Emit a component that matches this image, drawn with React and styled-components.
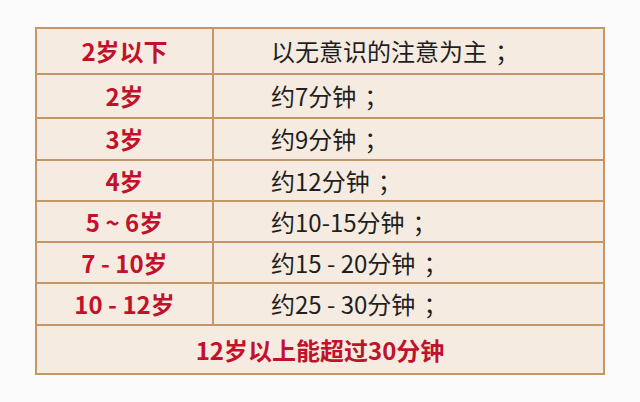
import React from 'react';
import styled, { createGlobalStyle } from 'styled-components';

const GlobalStyle = createGlobalStyle`
  html, body {
    margin: 0;
    padding: 0;
    background: #fbfbfc;
  }
  body {
    font-family: "Noto Sans CJK SC", "Noto Sans", sans-serif;
  }
`;

const Page = styled.div`
  width: 640px;
  height: 402px;
  padding: 27px 35px 0 35px;
  box-sizing: border-box;
`;

const Table = styled.table`
  width: 570px;
  border-collapse: collapse;
  background: #f6ebe0;
  border: 2px solid #bf9160;
`;

const Row = styled.tr`
  height: ${p => p.h}px;
`;

const Age = styled.td`
  width: 175px;
  border: 2px solid #c49766;
  text-align: center;
  vertical-align: middle;
  color: #c1122b;
  font-weight: 700;
  font-size: 24px;
  padding: 0;
  line-height: 1;
`;

const Span = styled(Age)`
  width: auto;
`;

const Time = styled.td`
  border: 2px solid #c49766;
  padding: 0 0 0 57px;
  vertical-align: middle;
  color: #1f1f1f;
  font-size: 24px;
  line-height: 1;
`;

const Semi = styled.span`
  margin-left: 8px;
`;

const rows = [
  ['2岁以下', '以无意识的注意为主', 46],
  ['2岁', '约7分钟', 44],
  ['3岁', '约9分钟', 42],
  ['4岁', '约12分钟', 41],
  ['5 ~ 6岁', '约10-15分钟', 41],
  ['7 - 10岁', '约15 - 20分钟', 41],
  ['10 - 12岁', '约25 - 30分钟', 42],
];

export default function App() {
  return (
    <Page>
      <GlobalStyle />
      <Table>
        <tbody>
          {rows.map(([age, time, h]) => (
            <Row key={age} h={h}>
              <Age>{age}</Age>
              <Time>
                {time}
                <Semi>；</Semi>
              </Time>
            </Row>
          ))}
          <Row h={49}>
            <Span colSpan={2}>12岁以上能超过30分钟</Span>
          </Row>
        </tbody>
      </Table>
    </Page>
  );
}
